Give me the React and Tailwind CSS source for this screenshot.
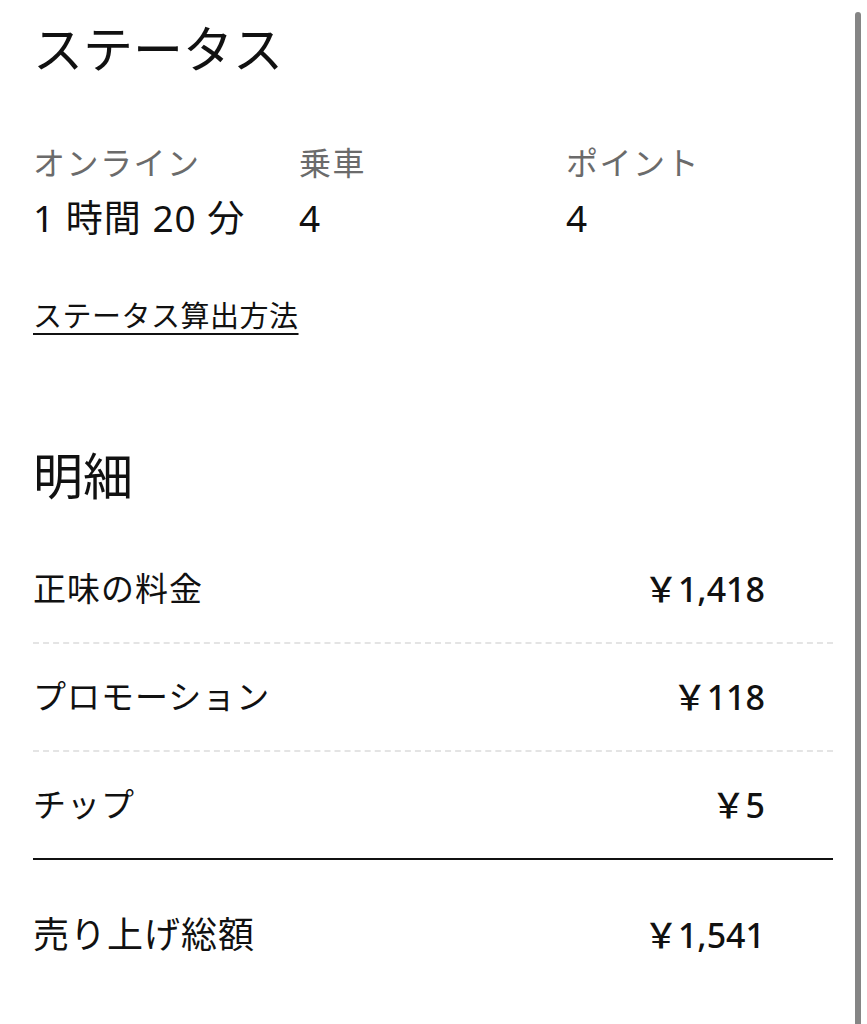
import React from "react";

const font = { fontFamily: '"Noto Sans", "Noto Sans CJK JP", sans-serif' };

function Row({ label, amount, h = "h-[108px]", dashed = true }) {
  return (
    <div className={`flex items-center justify-between ${h} ${dashed ? "border-b-2 border-dashed border-[#e4e4e4]" : ""}`}>
      <span className="text-[33px] tracking-[1px] text-[#111]">{label}</span>
      <span className="text-[34px] font-medium text-[#111] mr-[68px]">{amount}</span>
    </div>
  );
}

export default function App() {
  return (
    <div className="relative w-[867px] h-[1024px] bg-white overflow-hidden" style={font}>
      <div className="absolute right-[6px] top-[12px] bottom-0 w-[6px] bg-[#858585] rounded-t-sm" />
      <div className="pl-[33px] pr-[34px]">
        <h1 className="text-[50px] leading-[56px] pt-[21px] text-[#111] font-normal">ステータス</h1>
        <div className="grid grid-cols-[266px_267px_1fr] mt-[66px]">
          {[
            ["オンライン", "1 時間 20 分"],
            ["乗車", "4"],
            ["ポイント", "4"],
          ].map(([l, v]) => (
            <div key={l} className="flex flex-col">
              <span className="text-[32px] leading-[40px] tracking-[1.5px] text-[#6b6b6b]">{l}</span>
              <span className="text-[37px] leading-[44px] mt-[13px] tracking-[1px] text-[#111]">{v}</span>
            </div>
          ))}
        </div>
        <div className="mt-[58px]">
          <span className="text-[29px] leading-[36px] tracking-[0.5px] underline underline-offset-[6px] decoration-2 text-[#111]">ステータス算出方法</span>
        </div>
        <h2 className="text-[50px] leading-[56px] mt-[114px] text-[#111] font-normal">明細</h2>
        <div className="mt-[32px]">
          <Row label="正味の料金" amount="￥1,418" />
          <Row label="プロモーション" amount="￥118" />
          <Row label="チップ" amount="￥5" h="h-[106px]" dashed={false} />
          <div className="h-[2px] bg-[#111]" />
          <div className="flex items-center justify-between h-[150px]">
            <span className="text-[36px] tracking-[1px] text-[#111]">売り上げ総額</span>
            <span className="text-[34px] font-medium text-[#111] mr-[68px]">￥1,541</span>
          </div>
        </div>
      </div>
    </div>
  );
}
